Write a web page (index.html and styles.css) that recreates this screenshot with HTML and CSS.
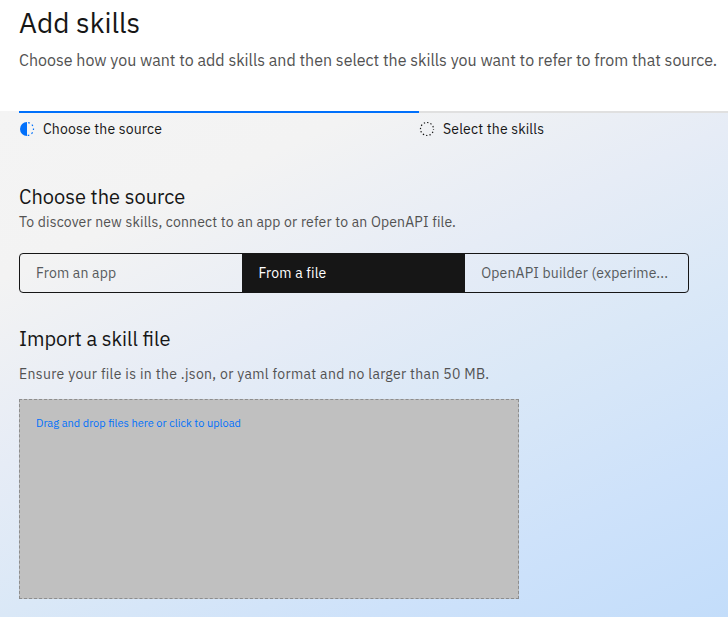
FILE: index.html
```html
<!DOCTYPE html>
<html lang="en">
<head>
<meta charset="utf-8">
<title>Add skills</title>
<link rel="stylesheet" href="styles.css">
</head>
<body>
<header class="page-header">
  <h1 class="title">Add skills</h1>
  <p class="subtitle">Choose how you want to add skills and then select the skills you want to refer to from that source.</p>
</header>
<main class="content">
  <ol class="progress">
    <li class="step step-current">
      <svg class="step-icon" viewBox="0 0 16 16"><path d="M8 1a7 7 0 0 0 0 14z" fill="currentColor"/><path d="M8 1.5a6.5 6.5 0 0 1 0 13" fill="none" stroke="currentColor" stroke-width="1.2" stroke-dasharray="1.6 2.48" stroke-dashoffset="-1.24"/></svg>
      <span>Choose the source</span>
    </li>
    <li class="step step-next">
      <svg class="step-icon" viewBox="0 0 16 16"><circle cx="8" cy="8" r="6.5" fill="none" stroke="currentColor" stroke-width="1.2" stroke-dasharray="1.3 2.103" stroke-dashoffset="0.65"/></svg>
      <span>Select the skills</span>
    </li>
  </ol>
  <section class="source">
    <h2 class="heading">Choose the source</h2>
    <p class="text text-source">To discover new skills, connect to an app or refer to an OpenAPI file.</p>
    <div class="switcher">
      <button class="option">From an app</button>
      <button class="option selected">From a file</button>
      <button class="option">OpenAPI builder (experime...</button>
    </div>
  </section>
  <section class="import">
    <h2 class="heading">Import a skill file</h2>
    <p class="text text-import">Ensure your file is in the .json, or yaml format and no larger than 50 MB.</p>
    <div class="dropzone">Drag and drop files here or click to upload</div>
  </section>
</main>
</body>
</html>
```
FILE: styles.css
```css
* { box-sizing: border-box; }
body {
  margin: 0;
  width: 728px;
  height: 617px;
  overflow: hidden;
  display: flex;
  flex-direction: column;
  background: #fff;
  color: #161616;
  font-family: "IBM Plex Sans", Roboto, sans-serif;
  white-space: nowrap;
}
h1, h2, p, ol { margin: 0; padding: 0; font-weight: 400; }
.page-header { height: 111px; padding: 5px 0 0 19px; }
.title { font-size: 28px; line-height: 36px; }
.subtitle { margin-top: 7px; font-size: 16px; line-height: 24px; color: #525252; }
.content {
  flex: 1;
  padding-left: 19px;
  background: linear-gradient(155deg, #f4f4f4 0%, #f3f3f3 20%, #e6ecf6 42%, #dae8f7 60%, #cee2fa 80%, #c3ddfa 100%);
}
.progress { display: flex; list-style: none; }
.step {
  height: 32px;
  display: flex;
  align-items: center;
  gap: 8px;
  border-top: 2px solid #e0e0e0;
  padding-top: 2px;
  font-size: 14px;
  letter-spacing: 0.16px;
}
.step-current { width: 400px; border-color: #0070fb; }
.step-next { flex: 1; }
.step-icon { width: 16px; height: 16px; }
.step-current .step-icon { color: #0070fb; }
.source { margin-top: 40px; }
.heading { font-size: 20px; line-height: 28px; }
.text { font-size: 14px; line-height: 18px; color: #525252; letter-spacing: 0.16px; }
.text-source { margin-top: 2px; }
.switcher {
  width: 670px;
  height: 40px;
  margin-top: 22px;
  display: flex;
  border: 1px solid #161616;
  border-radius: 4px;
  overflow: hidden;
}
.option {
  flex: 1;
  border: 0;
  padding: 0 16px;
  background: transparent;
  color: #565a5c;
  font: 14px/18px "IBM Plex Sans", Roboto, sans-serif;
  letter-spacing: 0.16px;
  text-align: left;
  white-space: nowrap;
}
.option:first-child { flex: 0 0 222.4px; }
.selected { background: #161616; color: #fff; }
.import { margin-top: 32px; }
.text-import { margin-top: 12px; letter-spacing: 0.32px; }
.dropzone {
  width: 500px;
  height: 200px;
  margin-top: 16px;
  padding: 16px;
  border: 1px dashed #8d8d8d;
  background: #c0c0c0;
  color: #0070fb;
  font-size: 11px;
  line-height: 14px;
}
```
